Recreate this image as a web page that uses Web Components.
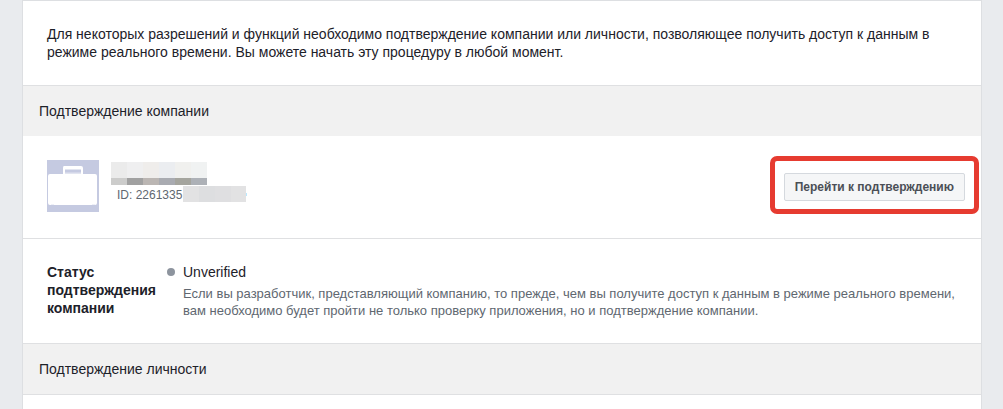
<!DOCTYPE html>
<html lang="ru">
<head>
<meta charset="utf-8">
<title>Подтверждение компании</title>
<style>
html { min-height: 100%; background: #e9ebee; }
body { margin: 0; font: 14px/18px "Liberation Sans", Arial, sans-serif; color: #1d2129; }
</style>
</head>
<body>
<review-page>
  <page-panel class="even">
    <page-note>Для некоторых разрешений и функций необходимо подтверждение компании или личности, позволяющее получить доступ к данным в режиме реального времени. Вы можете начать эту процедуру в любой момент.</page-note>
  </page-panel>
  <section-heading>Подтверждение компании</section-heading>
  <page-panel>
    <company-row company-id="2261335"><action-button slot="action">Перейти к подтверждению</action-button></company-row>
  </page-panel>
  <page-panel class="ruled even">
    <status-row>
      <span slot="label">Статус подтверждения компании</span>
      <span slot="state">Unverified</span>
      <span slot="hint">Если вы разработчик, представляющий компанию, то прежде, чем вы получите доступ к данным в режиме реального времени, вам необходимо будет пройти не только проверку приложения, но и подтверждение компании.</span>
    </status-row>
  </page-panel>
  <section-heading>Подтверждение личности</section-heading>
  <page-panel class="ruled empty"></page-panel>
</review-page>

<script>
const define = (name, html) => {
  const template = document.createElement('template');
  template.innerHTML = html;
  customElements.define(name, class extends HTMLElement {
    constructor() {
      super();
      this.attachShadow({ mode: 'open' }).append(template.content.cloneNode(true));
    }
    connectedCallback() {
      const id = this.shadowRoot.querySelector('.id-value');
      if (id) id.textContent = this.getAttribute('company-id');
    }
  });
};

define('review-page', `
<style>
  :host { display: block; padding: 0 21px 0 22px; }
  main { box-sizing: border-box; min-height: 100vh; background: #fff; border: 1px solid #dddfe2; border-bottom: 0; }
</style>
<main><slot></slot></main>`);

define('page-panel', `
<style>
  :host { display: block; padding: 24px 24px 26px; }
  :host(.even) { padding-bottom: 24px; }
  :host(.ruled) { border-top: 1px solid #dfe0e2; }
  :host(.empty) { padding: 0; }
</style>
<slot></slot>`);

define('page-note', `
<style>
  :host { display: block; }
  p { margin: 0; }
</style>
<p><slot></slot></p>`);

define('section-heading', `
<style>
  :host { display: block; padding: 16px; background: #f1f1f1; border-top: 1px solid #dfe0e2; }
  h2 { margin: 0; font: inherit; }
</style>
<h2><slot></slot></h2>`);

define('company-row', `
<style>
  :host { display: flex; align-items: flex-start; gap: 12px; margin-right: -22px; }
  svg { display: block; flex: none; }
  .info { flex: 1; min-width: 0; padding-top: 2px; }
  .id { display: flex; align-items: flex-start; gap: 1px; padding: 1px 0 0 6px; font-size: 12px; line-height: 18px; color: #606770; white-space: pre; }
  ::slotted(*) { margin: -4px 0 -2px; }
</style>
<svg width="52" height="52" viewBox="0 0 52 52" aria-hidden="true">
  <path fill="#c5cae1" d="M0 0h52v52H0z"/>
  <path fill="#fff" fill-rule="evenodd" d="M17 6h17q2 0 2 2v6h12q2 0 2 2v27q0 2-2 2H3q-2 0-2-2V16q0-2 2-2h13V8q0-2 1-2zm1 3.500v4.500h16V9.500z"/>
  <path fill="#e2e5f0" d="M18 12.500h16V14H18z"/>
  <path fill="#eef0f7" d="M4 44h3v1H4zm41 0h3v1h-3z"/>
</svg>
<div class="info">
  <svg width="96" height="23" viewBox="0 0 96 23" shape-rendering="crispEdges" aria-hidden="true">
    <path fill="#ebebeb" d="M0 0h16v16H0z"/><path fill="#efeff0" d="M16 0h16v16H16z"/>
    <path fill="#efedeb" d="M32 0h16v16H32z"/><path fill="#ebedf0" d="M48 0h16v16H48z"/>
    <path fill="#f0f0ee" d="M64 0h16v16H64z"/><path fill="#f0f2f2" d="M80 0h16v16H80z"/>
    <path fill="#cccccb" d="M0 16h16v7H0z"/><path fill="#a1a1a1" d="M16 16h16v7H16z"/>
    <path fill="#bbb6b3" d="M32 16h16v7H32z"/><path fill="#a9abb1" d="M48 16h16v7H48z"/>
    <path fill="#a5a59e" d="M64 16h16v7H64z"/><path fill="#adb1b7" d="M80 16h16v7H80z"/>
  </svg>
  <div class="id"><span>ID: <span class="id-value"></span></span><svg width="64" height="16" viewBox="0 0 64 16" shape-rendering="crispEdges" aria-hidden="true">
    <path fill="#e2e2e3" d="M0 0h63v16H0z"/><path fill="#dddee0" d="M16 0h16v16H16z"/><path fill="#dfdfe1" d="M32 0h16v16H32z"/><path fill="#b9e8ff" d="M63 7h1v3h-1z"/>
  </svg></div>
</div>
<slot name="action"></slot>`);

define('action-button', `
<style>
  :host { display: block; flex: none; padding: 12px 9px 8px; border: 5px solid #e63b30; border-radius: 7px; }
  button { display: block; box-sizing: border-box; height: 28px; padding: 0 10px; border: 1px solid #d5d9de; border-radius: 2px; background: #f5f6f7; color: #4b4f56; font: bold 12px/26px "Liberation Sans", Arial, sans-serif; white-space: nowrap; cursor: pointer; }
</style>
<button type="button"><slot></slot></button>`);

define('status-row', `
<style>
  :host { display: grid; grid-template-columns: 112px 8px minmax(0, 1fr); column-gap: 8px; }
  .label { font-weight: bold; }
  .dot { width: 8px; height: 8px; margin-top: 5px; border-radius: 50%; background: #8d949e; }
  .hint { margin-top: 4px; font-size: 13px; line-height: 17px; color: #606770; }
</style>
<div class="label"><slot name="label"></slot></div>
<div class="dot"></div>
<div><div><slot name="state"></slot></div><div class="hint"><slot name="hint"></slot></div></div>`);
</script>
</body>
</html>
